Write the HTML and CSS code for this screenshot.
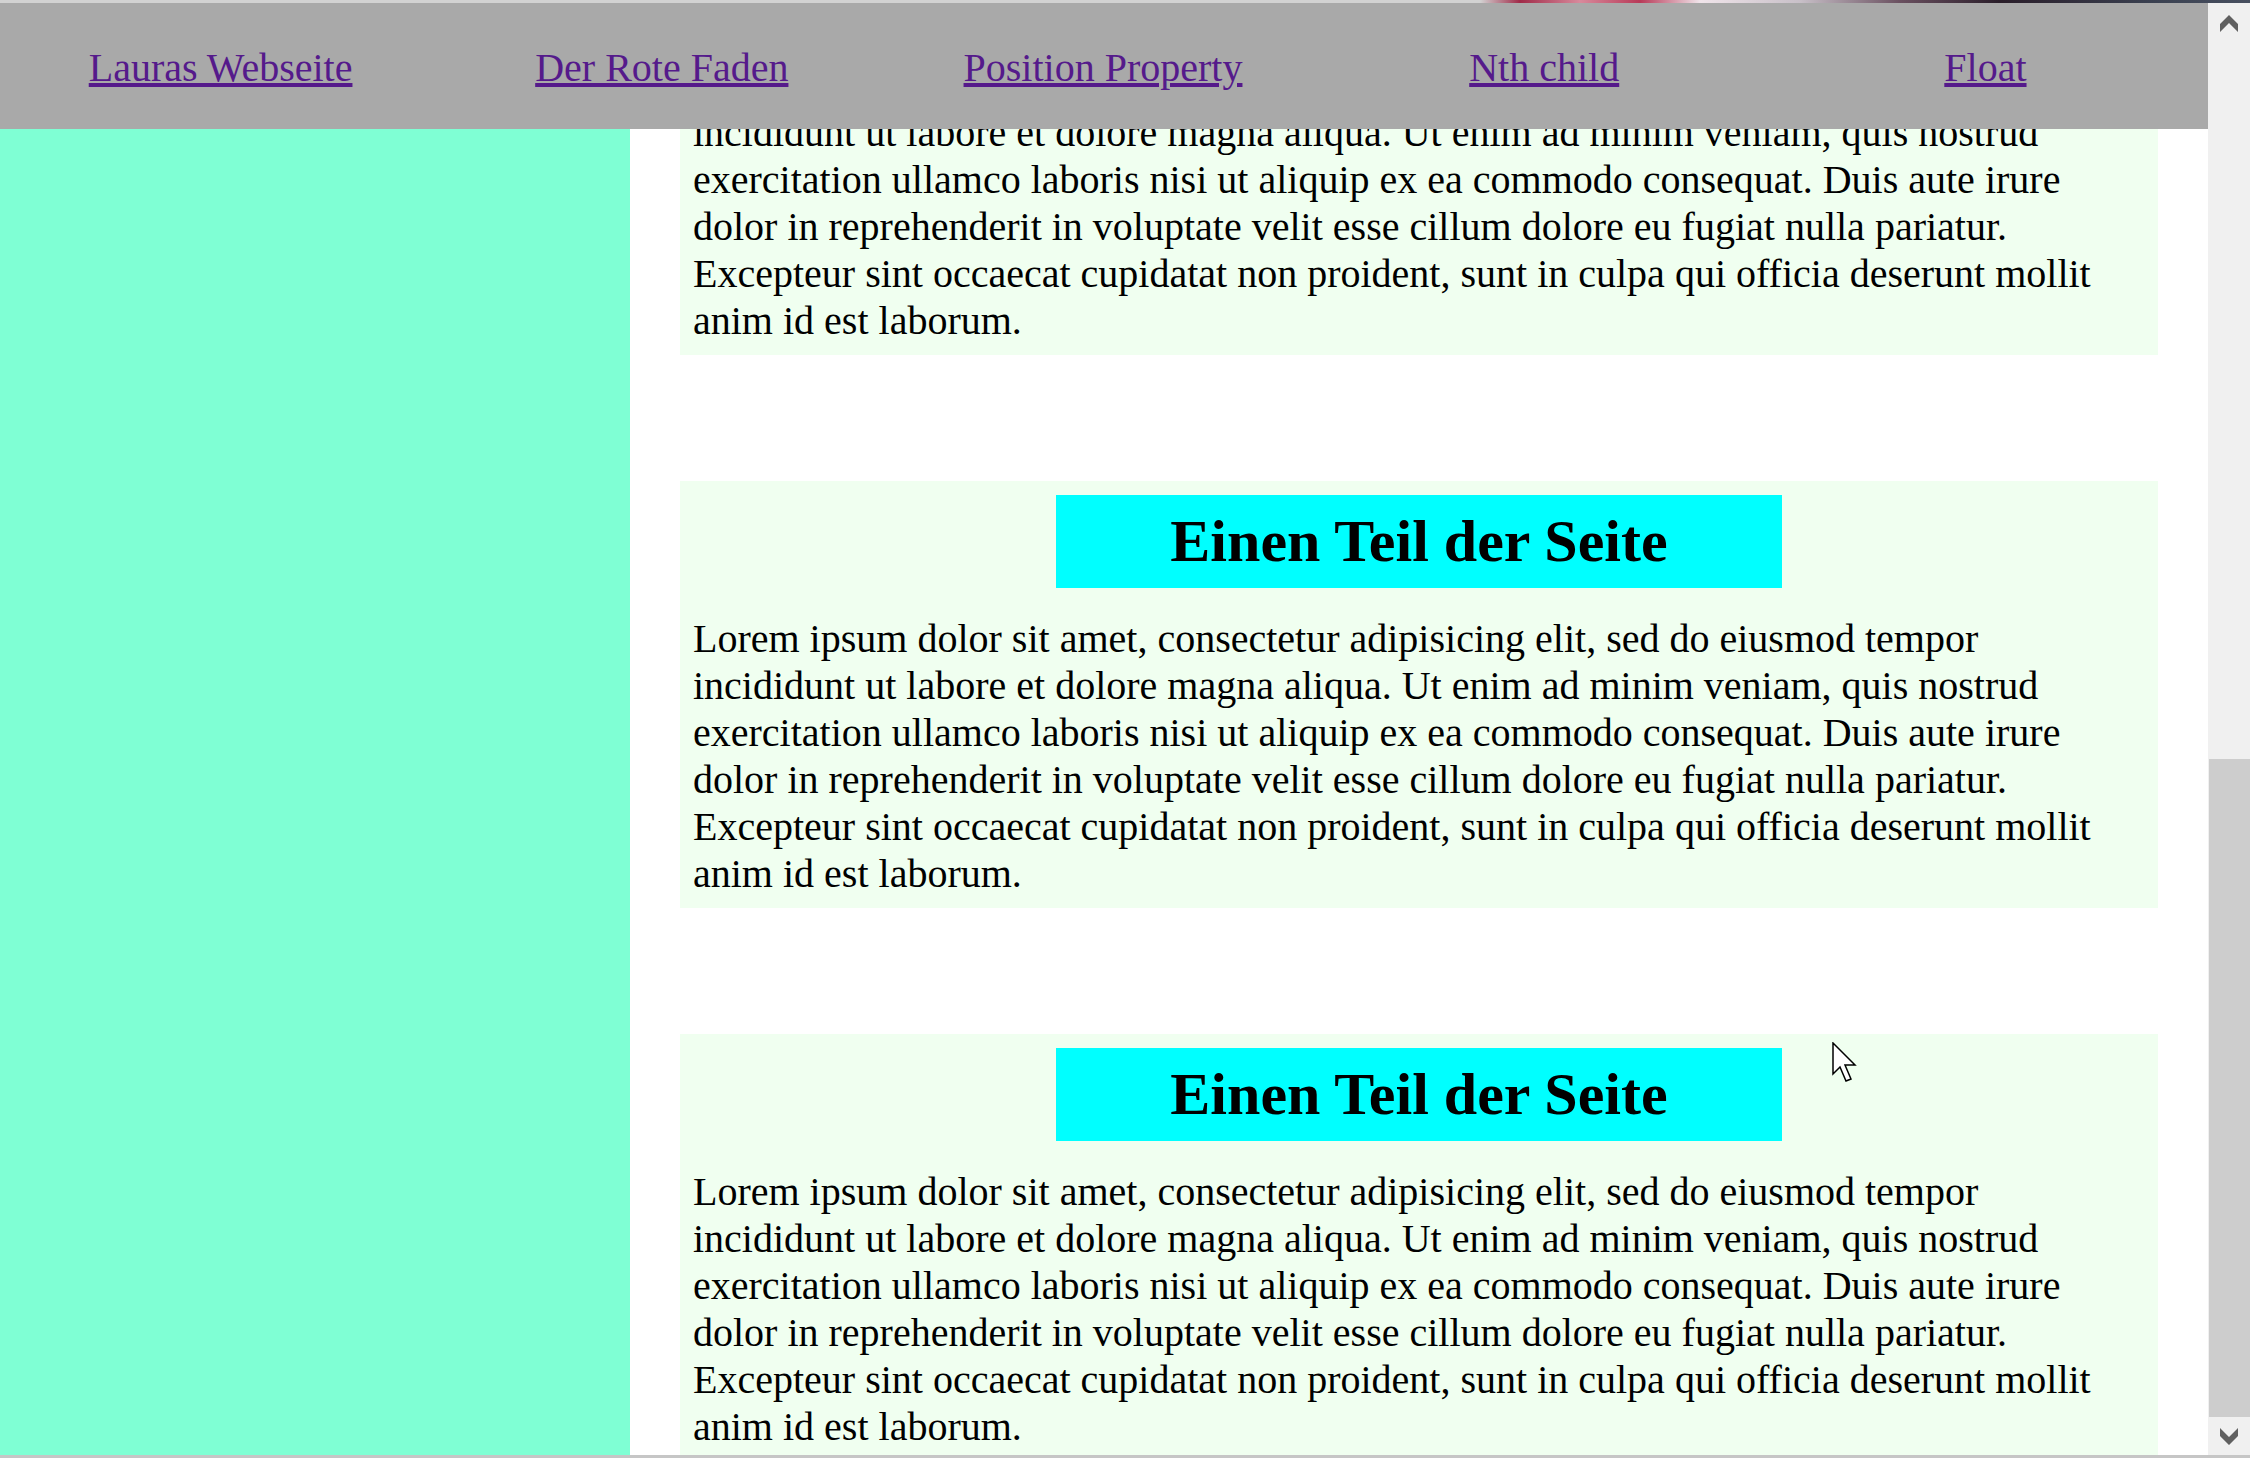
FILE: index.html
```html
<!DOCTYPE html>
<html lang="de">
<head>
<meta charset="utf-8">
<title>Lauras Webseite</title>
<link rel="stylesheet" href="styles.css">
</head>
<body>
<div class="topstrip"></div>
<div class="window">
  <aside class="sidebar"></aside>
  <main class="main">
    <div class="content">
      <section class="part">
        <h2 class="part-title">Einen Teil der Seite</h2>
        <p class="part-text">Lorem ipsum dolor sit amet, consectetur adipisicing elit, sed do eiusmod tempor incididunt ut labore et dolore magna aliqua. Ut enim ad minim veniam, quis nostrud exercitation ullamco laboris nisi ut aliquip ex ea commodo consequat. Duis aute irure dolor in reprehenderit in voluptate velit esse cillum dolore eu fugiat nulla pariatur. Excepteur sint occaecat cupidatat non proident, sunt in culpa qui officia deserunt mollit anim id est laborum.</p>
      </section>
      <section class="part">
        <h2 class="part-title">Einen Teil der Seite</h2>
        <p class="part-text">Lorem ipsum dolor sit amet, consectetur adipisicing elit, sed do eiusmod tempor incididunt ut labore et dolore magna aliqua. Ut enim ad minim veniam, quis nostrud exercitation ullamco laboris nisi ut aliquip ex ea commodo consequat. Duis aute irure dolor in reprehenderit in voluptate velit esse cillum dolore eu fugiat nulla pariatur. Excepteur sint occaecat cupidatat non proident, sunt in culpa qui officia deserunt mollit anim id est laborum.</p>
      </section>
      <section class="part">
        <h2 class="part-title">Einen Teil der Seite</h2>
        <p class="part-text">Lorem ipsum dolor sit amet, consectetur adipisicing elit, sed do eiusmod tempor incididunt ut labore et dolore magna aliqua. Ut enim ad minim veniam, quis nostrud exercitation ullamco laboris nisi ut aliquip ex ea commodo consequat. Duis aute irure dolor in reprehenderit in voluptate velit esse cillum dolore eu fugiat nulla pariatur. Excepteur sint occaecat cupidatat non proident, sunt in culpa qui officia deserunt mollit anim id est laborum.</p>
      </section>
    </div>
  </main>
  <div class="scrollbar">
    <div class="sb-btn sb-up">
      <svg width="18" height="17" viewBox="0 0 18 17"><polygon points="9,0 18,9 18,17 9,8 0,17 0,9" fill="#606060"/></svg>
    </div>
    <div class="sb-track"><div class="sb-thumb"></div></div>
    <div class="sb-btn sb-down">
      <svg width="18" height="17" viewBox="0 0 18 17"><polygon points="0,0 9,9 18,0 18,8 9,17 0,8" fill="#606060"/></svg>
    </div>
  </div>
  <nav class="topnav">
    <div class="nav-item"><a class="nav-link" href="#">Lauras Webseite</a></div>
    <div class="nav-item"><a class="nav-link" href="#">Der Rote Faden</a></div>
    <div class="nav-item"><a class="nav-link" href="#">Position Property</a></div>
    <div class="nav-item"><a class="nav-link" href="#">Nth child</a></div>
    <div class="nav-item"><a class="nav-link" href="#">Float</a></div>
  </nav>
  <svg class="cursor" width="26" height="42" viewBox="0 0 26 42"><polygon points="1,1 1,32 8,25 14,39 19,37 13,23 23,23" fill="#ffffff" stroke="#000000" stroke-width="1.5" stroke-linejoin="miter"/></svg>
</div>
<div class="bottomline"></div>
</body>
</html>
```
FILE: styles.css
```css
html, body {
  margin: 0;
  padding: 0;
  height: 1458px;
  overflow: hidden;
  background: #ffffff;
  font-family: "Liberation Serif", "Times New Roman", serif;
}

.topstrip {
  height: 3px;
  background: linear-gradient(to right,
    #d2d2d2 0px, #d2d2d2 1480px, #a02a48 1520px, #d88a9c 1580px,
    #b83a58 1640px, #f0e4ea 1700px, #c8c0c8 1800px, #6a5060 1900px,
    #2a1e2a 2000px, #3a4050 2150px, #485060 2250px);
}

.window {
  position: relative;
  display: flex;
  height: 1452px;
}

.sidebar {
  width: 630px;
  flex: none;
  background: #7fffd4;
}

.main {
  flex: 1;
  overflow: hidden;
  background: #ffffff;
}

.content {
  margin-top: -75px;
  padding: 0 50px;
}

.part {
  background: #f0fff0;
  padding: 14px 13px 11px 13px;
  margin-bottom: 126px;
}

.part-title {
  width: 50%;
  margin: 0 auto 27px auto;
  padding: 12px 0;
  background: #00ffff;
  color: #000000;
  text-align: center;
  font-size: 60px;
  font-weight: bold;
  line-height: 69px;
}

.part-text {
  margin: 0;
  font-size: 40px;
  line-height: 47px;
  color: #000000;
}

.scrollbar {
  width: 42px;
  flex: none;
  display: flex;
  flex-direction: column;
  background: #f0f0f0;
}

.sb-btn {
  display: flex;
  align-items: center;
  justify-content: center;
  flex: none;
}

.sb-up {
  height: 40px;
}

.sb-down {
  height: 38px;
}

.sb-track {
  flex: 1;
  display: flex;
  flex-direction: column;
  justify-content: flex-end;
}

.sb-thumb {
  height: 658px;
  margin-left: 1px;
  background: #cdcdcd;
}

.topnav {
  position: absolute;
  top: 0;
  left: 0;
  right: 42px;
  height: 126px;
  box-sizing: border-box;
  padding: 3px 2px 0 0;
  display: flex;
  align-items: center;
  background: #a9a9a9;
}

.nav-item {
  flex: 1;
  text-align: center;
  font-size: 40px;
  line-height: 46px;
}

.nav-link {
  color: #551a8b;
  text-decoration: underline;
}

.cursor {
  position: absolute;
  left: 1832px;
  top: 1039px;
}

.bottomline {
  height: 3px;
  background: #c6c6c6;
}
```
